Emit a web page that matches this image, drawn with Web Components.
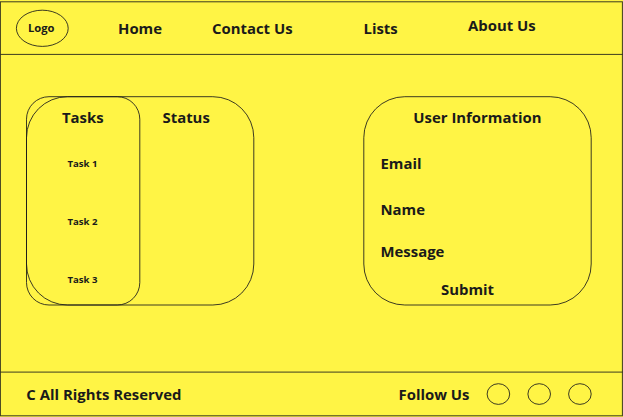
<!DOCTYPE html>
<html lang="en">
<head>
<meta charset="utf-8">
<title>Tasks wireframe</title>
<style>
  html, body { margin: 0; height: 100%; background: #fff445; }
</style>
</head>
<body>
<wire-page>
  <wire-header slot="header"></wire-header>
  <task-board></task-board>
  <user-form></user-form>
  <wire-footer slot="footer"></wire-footer>
</wire-page>
<script>
const define = (name, html) => customElements.define(name, class extends HTMLElement {
  constructor() {
    super();
    this.attachShadow({ mode: 'open' }).innerHTML = html;
  }
});

// A single line of bold text; --size sets its font size.
define('wire-text', `
  <style>
    :host { display: block; height: 20px; line-height: 20px; white-space: nowrap;
      font-size: var(--size, 14.9px); font-weight: 700; }
  </style><slot></slot>`);

// A thin outline drawn at fractional coordinates, behind its slotted content.
customElements.define('wire-shape', class extends HTMLElement {
  connectedCallback() {
    if (this.shadowRoot) return;
    const [x, y, w, h, r] = this.getAttribute('box').split(' ').map(Number);
    const shape = r === undefined
      ? `<ellipse cx="${x + w / 2}" cy="${y + h / 2}" rx="${w / 2}" ry="${h / 2}"/>`
      : `<rect x="${x}" y="${y}" width="${w}" height="${h}" rx="${r}"/>`;
    this.attachShadow({ mode: 'open' }).innerHTML = `
      <style>
        :host { display: block; position: relative; box-sizing: border-box; }
        svg { position: absolute; left: 0; top: 0; width: 100%; height: 100%; overflow: visible;
          fill: none; stroke: #1a1a1a; stroke-width: 1; stroke-opacity: .85; pointer-events: none; }
      </style><svg aria-hidden="true">${shape}</svg><slot></slot>`;
  }
});

define('wire-header', `
  <style>
    :host { display: flex; height: 54px; box-sizing: border-box; }
    .logo { width: 54px; height: 38px; margin: 9px 0 0 15px; padding: 8.5px 0 0 13px; }
    .logo wire-text { --size: 11.2px; }
    nav { display: flex; padding-top: 18px; }
    .home { margin-left: 49px; width: 94px; }
    .contact { width: 151.5px; }
    .lists { width: 104.5px; }
    .about { margin-top: -3px; }
  </style>
  <wire-shape class="logo" box="1.4 1.2 51.8 36.2"><wire-text>Logo</wire-text></wire-shape>
  <nav>
    <wire-text class="home">Home</wire-text>
    <wire-text class="contact">Contact Us</wire-text>
    <wire-text class="lists">Lists</wire-text>
    <wire-text class="about">About Us</wire-text>
  </nav>`);

define('task-board', `
  <style>
    :host { display: block; width: 228px; height: 210px; }
    .board { display: flex; height: 210px; }
    .tasks { width: 114px; height: 210px; flex: none; }
    .tasks > * { padding-left: 41.5px; }
    .tasks > .title { margin-top: 11px; padding-left: 36px; }
    .item { --size: 9.6px; }
    .first { margin-top: 27px; }
    .next { margin-top: 38px; }
    .status { margin: 11px 0 0 22.5px; }
  </style>
  <wire-shape class="board" box="0.5 0.7 227.3 208.3 41">
    <wire-shape class="tasks" box="0.5 0.7 113.3 208.3 22.5">
      <wire-text class="title">Tasks</wire-text>
      <wire-text class="item first">Task 1</wire-text>
      <wire-text class="item next">Task 2</wire-text>
      <wire-text class="item next">Task 3</wire-text>
    </wire-shape>
    <wire-text class="status">Status</wire-text>
  </wire-shape>`);

define('user-form', `
  <style>
    :host { display: block; width: 228px; }
    .card { height: 210px; padding: 11px 0 0 17.5px; }
    .title { margin-left: 32.8px; }
    .email { margin-top: 26px; }
    .name { margin-top: 26px; }
    .message { margin-top: 22px; }
    .submit { margin: 18px 0 0 60.5px; }
  </style>
  <wire-shape class="card" box="0.8 0.7 227.4 208.3 41">
    <wire-text class="title">User Information</wire-text>
    <wire-text class="email">Email</wire-text>
    <wire-text class="name">Name</wire-text>
    <wire-text class="message">Message</wire-text>
    <wire-text class="submit">Submit</wire-text>
  </wire-shape>`);

define('wire-footer', `
  <style>
    :host { display: flex; height: 45px; box-sizing: border-box; padding: 12px 0 0 26.3px; }
    .rights { width: 372.2px; }
    .follow { width: 87.5px; }
    .links { display: flex; gap: 17px; }
    .links wire-shape { width: 24px; height: 22px; margin-top: -1px; }
  </style>
  <wire-text class="rights">C All Rights Reserved</wire-text>
  <wire-text class="follow">Follow Us</wire-text>
  <div class="links">
    <wire-shape box="1.1 0.7 22.6 20.7"></wire-shape>
    <wire-shape box="0.9 0.7 22.6 20.7"></wire-shape>
    <wire-shape box="0.6 0.7 22.6 20.7"></wire-shape>
  </div>`);

define('wire-page', `
  <style>
    :host { display: block; width: 623px; height: 417px; overflow: hidden; position: relative;
      background: #fff445; color: #1a1a1a; font-family: "Open Sans", "Noto Sans", sans-serif; }
    .page { display: grid; grid-template-rows: 54px 318px 45px; height: 417px; }
    main { display: flex; gap: 109px; padding: 42px 0 0 26px; }
    .frame { position: absolute; inset: 0; width: 623px; height: 417px;
      fill: none; stroke: #1a1a1a; stroke-width: 1; stroke-opacity: .85; pointer-events: none; }
  </style>
  <svg class="frame" aria-hidden="true">
    <rect x="0.4" y="1.8" width="622" height="414"/>
    <path d="M0.5 54.4H622.5M0.5 372.1H622.5"/>
  </svg>
  <div class="page">
    <slot name="header"></slot>
    <main><slot></slot></main>
    <slot name="footer"></slot>
  </div>`);
</script>
</body>
</html>
